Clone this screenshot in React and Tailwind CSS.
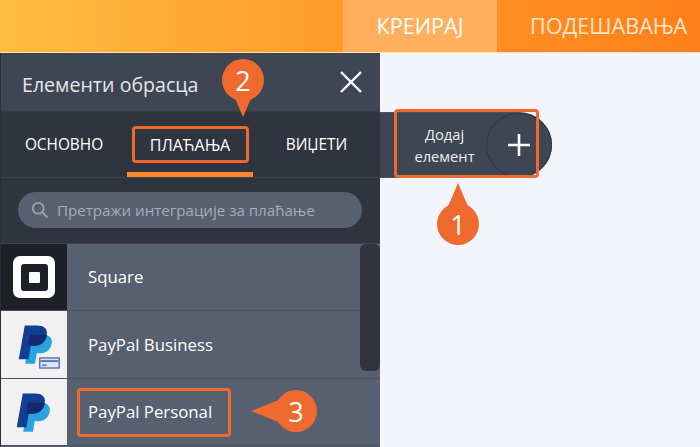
import React from 'react';

const PayPalMark = ({ className }) => (
  <svg viewBox="0 0 24 28" className={className}>
    <path d="M8 7h8.500c3.500 0 6.500 1.800 6 5.500-.6 4.500-3.500 7-7.500 7h-2.500l-1.200 7H4.800z" fill="#29a3e0" />
    <path d="M4.500 1h8.500c4 0 6.800 2 6.200 6-.7 4.800-3.900 7.500-8.200 7.500H8.500L7 23.500H.5z" fill="#123f94" />
    <path d="M7.900 7h8.600c1 0 1.900.2 2.700.5-.8 4.500-3.900 7-8.200 7H8.500L6.700 14z" fill="#152a6e" />
  </svg>
);

const Pin = ({ num, className, tail }) => (
  <div className={`absolute flex h-[42px] w-[42px] items-center justify-center rounded-full bg-[#f06a30] text-[27px] font-medium leading-none text-white ${className}`}>
    {tail}
    <span className="relative">{num}</span>
  </div>
);

const Row = ({ icon, iconBg, name, highlight, height }) => (
  <div className={`flex border-b border-[#4a5260] ${height}`}>
    <div className={`flex w-[66px] shrink-0 items-center justify-center ${iconBg}`}>{icon}</div>
    <div className="flex flex-1 items-center pl-[21px] text-[16.800px] text-white">
      {highlight ? (
        <span className="-ml-[11px] flex h-[49px] w-[154px] items-center rounded-[4px] border-[3px] border-[#f06a30] pl-[8px]">{name}</span>
      ) : (
        <span>{name}</span>
      )}
    </div>
  </div>
);

const App = () => {
  return (
    <div className="relative flex h-[447px] w-[700px] flex-col overflow-hidden bg-[#f3f4fc] font-['Open_Sans',sans-serif]">
      {/* top bar */}
      <div className="flex h-[53px] shrink-0 justify-end border-b border-[#ffe0b8] bg-[linear-gradient(90deg,#ffbd40,#ff9a28_50%,#ff7f1a)]">
        <div className="flex w-[154px] items-center justify-center bg-[#ffb05c] text-[21.600px] text-white">КРЕИРАЈ</div>
        <div className="flex w-[203px] items-center pl-[33px] text-[21.600px] text-[#ffe6cc]">ПОДЕШАВАЊА</div>
      </div>

      <div className="flex min-h-0 flex-1">
        {/* panel */}
        <div className="flex w-[380px] shrink-0 flex-col border-l border-[#2b2f38]">
          <div className="flex h-[59px] shrink-0 items-center justify-between border-b border-[#383d48] bg-[#3f4653] pl-[21px] pr-[17px]">
            <span className="mt-[5px] text-[19.600px] text-[#e4e6ea]">Елементи обрасца</span>
            <svg viewBox="0 0 24 24" className="h-[24px] w-[24px]" fill="none" stroke="#fff" strokeWidth="2.400">
              <path d="M2 2l20 20M22 2L2 22" />
            </svg>
          </div>

          <div className="flex h-[66px] shrink-0 border-b border-[#3d434e] bg-[#2f343e] text-[15.400px] text-white">
            <div className="flex w-[126px] items-center justify-center">ОСНОВНО</div>
            <div className="relative flex w-[126px] items-center justify-center border-b-[5px] border-[#ff8a2c] pt-[5px]">
              <span className="flex h-[37px] w-[117px] items-center justify-center rounded-[4px] border-[3px] border-[#f06a30] text-[16px]">ПЛАЋАЊА</span>
            </div>
            <div className="flex flex-1 items-center justify-center">ВИЏЕТИ</div>
          </div>

          <div className="flex h-[65px] shrink-0 items-center bg-[#2f343e] pb-[1px] pl-[17px] pr-[18px]">
            <div className="flex h-[36px] w-full items-center gap-[8px] rounded-full bg-[#566070] pl-[13px] text-[15.100px] text-[#a5adb9]">
              <svg viewBox="0 0 20 20" className="h-[18px] w-[18px] shrink-0" fill="none" stroke="#9aa3b0" strokeWidth="2">
                <circle cx="8" cy="8" r="6" />
                <path d="M12.500 12.500L18.500 18.500" />
              </svg>
              Претражи интеграције за плаћање
            </div>
          </div>

          <div className="relative min-h-0 flex-1 overflow-hidden border-t border-[#3d434e] bg-[#566070]">
            <Row
              name="Square"
              height="h-[67px]"
              iconBg="bg-[#1d2027]"
              icon={
                <div className="flex h-[42px] w-[42px] items-center justify-center rounded-[7px] bg-white">
                  <div className="flex h-[27px] w-[27px] items-center justify-center rounded-[3px] bg-[#1d2027]">
                    <div className="h-[11px] w-[11px] rounded-[1px] bg-white" />
                  </div>
                </div>
              }
            />
            <Row
              name="PayPal Business"
              height="h-[68px]"
              iconBg="bg-[#f1f1f1]"
              icon={
                <div className="relative h-[48px] w-[44px]">
                  <PayPalMark className="absolute left-[6px] top-[2px] h-[44px] w-[36px]" />
                  <svg viewBox="0 0 22 12" className="absolute bottom-0 right-[-4px] h-[12px] w-[21px]">
                    <rect width="22" height="12" rx="1" fill="#5b74b5" />
                    <rect x="1.500" y="1.500" width="19" height="9" fill="#dfe5f3" />
                    <rect x="1.500" y="3" width="19" height="2" fill="#5b74b5" />
                    <rect x="3" y="7.500" width="5" height="1.500" fill="#5b74b5" />
                  </svg>
                </div>
              }
            />
            <Row
              name="PayPal Personal"
              height="h-[67px]"
              highlight
              iconBg="bg-[#f1f1f1]"
              icon={<PayPalMark className="mt-[2px] h-[44px] w-[36px]" />}
            />
            <div className="absolute right-0 top-0 h-[127px] w-[20px] rounded-[6px] bg-[#2f343e]" />
          </div>
        </div>

        {/* canvas */}
        <div className="flex flex-1 items-start pt-[59px]">
          <div className="flex h-[66px] w-[172px] items-center rounded-r-full border-y border-[#4a505c] bg-[#3f4653]">
            <div className="w-[106px] pl-[23px] text-center text-[14.700px] leading-[22px] text-[#eceef1]">
              Додај
              <br />
              елемент
            </div>
            <div className="flex h-[64px] w-[66px] items-center justify-center rounded-full border border-[#2f343e]">
              <svg viewBox="0 0 22 22" className="h-[22px] w-[22px]" fill="none" stroke="#fff" strokeWidth="2.600">
                <path d="M11 0v22M0 11h22" />
              </svg>
            </div>
          </div>
        </div>
      </div>

      {/* tutorial annotations */}
      <div className="absolute left-[394px] top-[109px] h-[69px] w-[145px] rounded-[4px] border-[3px] border-[#f06a30]" />
      <Pin
        num="2"
        className="left-[222px] top-[59px]"
        tail={<div className="absolute left-[9px] top-[30px] h-0 w-0 border-x-[12px] border-t-[28px] border-x-transparent border-t-[#f06a30]" />}
      />
      <Pin
        num="1"
        className="left-[437px] top-[203px]"
        tail={<div className="absolute left-[9px] top-[-20px] h-0 w-0 border-x-[12px] border-b-[28px] border-x-transparent border-b-[#f06a30]" />}
      />
      <Pin
        num="3"
        className="left-[275px] top-[390px]"
        tail={<div className="absolute left-[-24px] top-[9px] h-0 w-0 border-y-[12px] border-r-[30px] border-y-transparent border-r-[#f06a30]" />}
      />
    </div>
  );
};

export default App;
